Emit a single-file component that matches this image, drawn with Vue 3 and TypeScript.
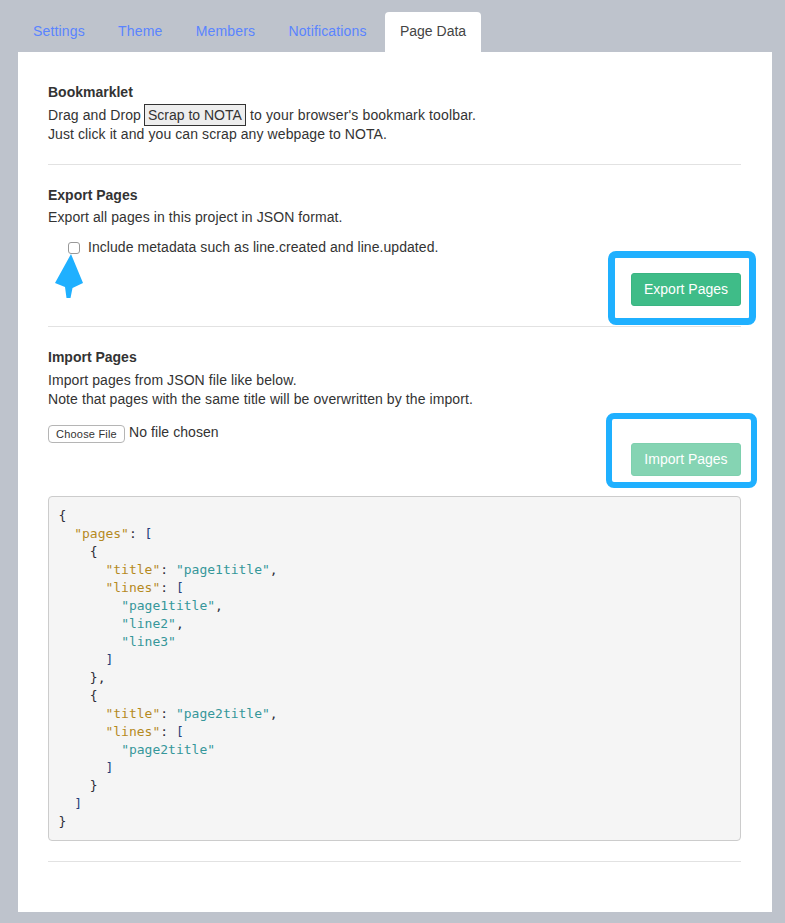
<script setup lang="ts">
type Seg = { t: string; c: string }
const tabs = ['Settings', 'Theme', 'Members', 'Notifications', 'Page Data']
const k = (t: string): Seg => ({ t, c: 'key' })
const s = (t: string): Seg => ({ t, c: 'str' })
const p = (t: string): Seg => ({ t, c: 'pun' })
const b = (t: string): Seg => ({ t, c: 'brk' })
const code: Seg[][] = [
  [p('{')],
  [p('  '), k('"pages"'), p(': '), b('[')],
  [p('    {')],
  [p('      '), k('"title"'), p(': '), s('"page1title"'), p(',')],
  [p('      '), k('"lines"'), p(': '), b('[')],
  [p('        '), s('"page1title"'), p(',')],
  [p('        '), s('"line2"'), p(',')],
  [p('        '), s('"line3"')],
  [p('      '), b(']')],
  [p('    },')],
  [p('    {')],
  [p('      '), k('"title"'), p(': '), s('"page2title"'), p(',')],
  [p('      '), k('"lines"'), p(': '), b('[')],
  [p('        '), s('"page2title"')],
  [p('      '), b(']')],
  [p('    }')],
  [p('  '), b(']')],
  [p('}')],
]
</script>

<template>
  <div class="page">
    <nav class="tabs">
      <a v-for="(tab, i) in tabs" :key="tab" class="tab" :class="{ active: i === tabs.length - 1 }">{{ tab }}</a>
    </nav>
    <main class="panel">
      <section>
        <h4 class="heading">Bookmarklet</h4>
        <p class="text">Drag and Drop <a class="scrap">Scrap to NOTA</a><span class="after"> to your browser's bookmark toolbar.</span><br />Just click it and you can scrap any webpage to NOTA.</p>
      </section>
      <hr class="rule" />
      <section class="block">
        <h4 class="heading tight">Export Pages</h4>
        <p class="text">Export all pages in this project in JSON format.</p>
        <label class="check">
          <span class="box"></span>
          <span>Include metadata such as line.created and line.updated.</span>
        </label>
        <svg class="arrow" width="32" height="46" viewBox="0 0 32 46" aria-hidden="true">
          <path d="M18 0 L30 29 L19.500 34 L17.500 44 L13.500 44 L12 33 L2 29 Z" fill="#1fb0ff" />
        </svg>
        <div class="actions export"><button class="btn">Export Pages</button></div>
        <div class="mark mark-export"></div>
      </section>
      <hr class="rule" />
      <section class="block">
        <h4 class="heading">Import Pages</h4>
        <p class="text">Import pages from JSON file like below.<br />Note that pages with the same title will be overwritten by the import.</p>
        <div class="file"><span class="file-btn">Choose File</span><span>No file chosen</span></div>
        <div class="actions import"><button class="btn disabled">Import Pages</button></div>
        <div class="mark mark-import"></div>
      </section>
      <pre class="code"><code><span v-for="(line, i) in code" :key="i" class="line"><span v-for="(seg, j) in line" :key="j" :class="seg.c">{{ seg.t }}</span></span></code></pre>
      <hr class="rule" />
    </main>
  </div>
</template>

<style>
html, body { margin: 0; background: #bec3cc; }
</style>

<style scoped>
.page {
  height: 923px;
  box-sizing: border-box;
  padding: 12px 13px 11px 18px;
  background: #bec3cc;
  font-family: "Liberation Sans", Arial, sans-serif;
  font-size: 14px;
  line-height: 20px;
  color: #333;
}
.tabs { display: flex; height: 40px; }
.tab {
  padding: 9px 15px 0;
  margin-right: 3.3px;
  color: #5a84ff;
  letter-spacing: 0.15px;
  border-radius: 4px 4px 0 0;
}
.tab.active { background: #fff; color: #444; padding: 9px 15px 0; letter-spacing: 0; }
.panel {
  height: 860px;
  box-sizing: border-box;
  padding: 30px 31px 0 30px;
  background: #fff;
}
.block { position: relative; }
.heading { margin: 0 0 4px; font-size: 14px; line-height: 20px; font-weight: 700; color: #333; }
.heading.tight { margin-bottom: 3px; }
.text { margin: 0; line-height: 19px; letter-spacing: 0.09px; }
.scrap {
  margin-left: -1px;
  padding: 2px 3px;
  border: 1px solid #333;
  background: #eee;
  letter-spacing: 0;
}
.after { letter-spacing: 0.14px; }
.rule { margin: 20px 0; height: 1px; border: 0; background: #e2e2e2; }
.check { display: flex; align-items: center; gap: 8px; margin: 10px 0 0 20px; height: 20px; letter-spacing: 0.06px; }
.box {
  width: 10px;
  height: 10px;
  margin-top: 1px;
  border: 1px solid #999;
  border-radius: 3px;
  background: #fff;
}
.arrow { position: absolute; left: 5px; top: 69px; }
.actions { display: flex; justify-content: flex-end; }
.export { margin-top: 16px; }
.import { margin-top: 1px; }
.btn {
  width: 110px;
  height: 33px;
  padding: 0 0 1px;
  border: 1px solid #3ab482;
  border-radius: 3px;
  background: #3fbc88;
  color: #fff;
  font: 14px/20px "Liberation Sans", Arial, sans-serif;
}
.btn.disabled { background: #85d4b3; border-color: #7ed0ae; }
.file { display: flex; align-items: center; gap: 4px; margin-top: 13px; height: 20px; letter-spacing: 0.07px; }
.file-btn {
  box-sizing: border-box;
  width: 77px;
  height: 18px;
  margin-top: 3px;
  border: 1px solid #b5b5b5;
  border-radius: 4px;
  background: #fff;
  font-size: 11px;
  line-height: 17px;
  text-align: center;
  letter-spacing: 0.2px;
}
.mark { position: absolute; box-sizing: border-box; border: 7px solid #1fb0ff; border-radius: 8px; pointer-events: none; }
.mark-export { left: 560px; right: -15px; top: 66px; height: 74px; }
.mark-import { left: 558px; right: -16px; top: 66px; height: 75px; border-width: 6px; }
.code {
  margin: 20px 0 0;
  padding: 9.5px;
  border: 1px solid #ccc;
  border-radius: 4px;
  background: #f5f5f5;
  font-family: "DejaVu Sans Mono", monospace;
  font-size: 13px;
  line-height: 18px;
}
.line { display: block; height: 18px; }
.key { color: #b58a1e; }
.str { color: #35979a; }
.pun { color: #2e2e38; }
.brk { color: #26407a; }
</style>
